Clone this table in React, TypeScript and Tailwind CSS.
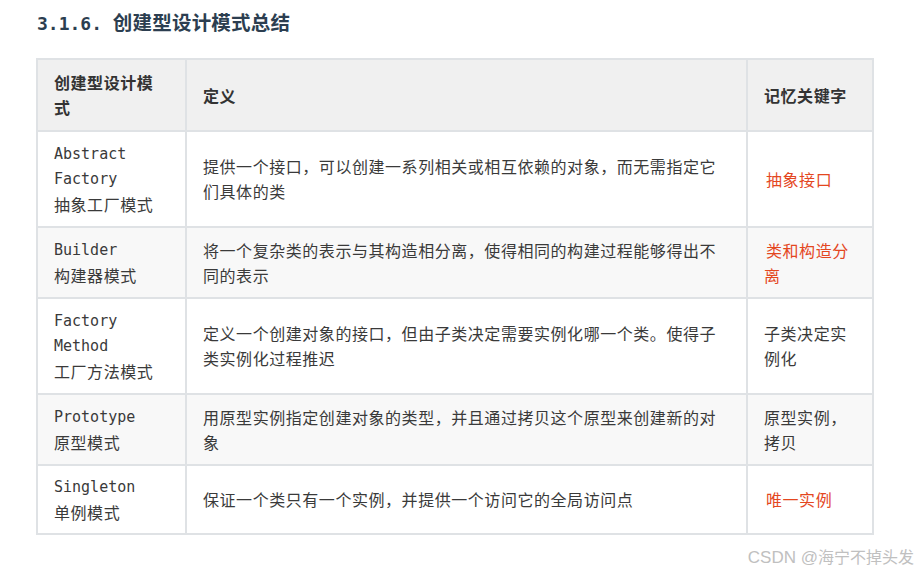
const rows = [
  {
    en: "Abstract Factory",
    zh: "抽象工厂模式",
    def: ["提供一个接口，可以创建一系列相关或相互依赖的对象，而无需指定它", "们具体的类"],
    key: "抽象接口",
    red: true,
  },
  {
    en: "Builder",
    zh: "构建器模式",
    def: ["将一个复杂类的表示与其构造相分离，使得相同的构建过程能够得出不", "同的表示"],
    key: "类和构造分离",
    red: true,
  },
  {
    en: "Factory Method",
    zh: "工厂方法模式",
    def: ["定义一个创建对象的接口，但由子类决定需要实例化哪一个类。使得子", "类实例化过程推迟"],
    key: "子类决定实例化",
    red: false,
  },
  {
    en: "Prototype",
    zh: "原型模式",
    def: ["用原型实例指定创建对象的类型，并且通过拷贝这个原型来创建新的对", "象"],
    key: "原型实例，拷贝",
    red: false,
  },
  {
    en: "Singleton",
    zh: "单例模式",
    def: ["保证一个类只有一个实例，并提供一个访问它的全局访问点"],
    key: "唯一实例",
    red: true,
  },
];

const cell = "border-2 border-[#dfe2e5] pl-4 pr-5 align-middle";

export default function App() {
  return (
    <div className="w-[920px] h-[571px] overflow-hidden bg-white font-['Noto_Sans_CJK_SC',sans-serif] text-[#3a3a3a] [text-spacing-trim:space-all]">
      <h3 className="pl-[37px] pt-[10px] leading-[24px] font-bold text-[#2c3e50]">
        <span className="font-['DejaVu_Sans_Mono',monospace] text-[18px]">3.1.6. </span>
        <span className="text-[19.5px] tracking-[0.2px]">创建型设计模式总结</span>
      </h3>

      <div className="pl-[36px] mt-[22px]">
        <table className="table-fixed border-collapse w-[836px] text-[16px] leading-[25px] tracking-[0.55px]">
          <colgroup>
            <col className="w-[149px]" />
            <col className="w-[561px]" />
            <col className="w-[126px]" />
          </colgroup>
          <thead>
            <tr className="bg-[#f0f0f0] text-[#333] font-bold text-left">
              <th className={cell + " py-[10px]"}>创建型设计模式</th>
              <th className={cell + " py-[10px]"}>定义</th>
              <th className={cell + " py-[10px]"}>记忆关键字</th>
            </tr>
          </thead>
          <tbody>
            {rows.map((r, i) => {
              const py = i === rows.length - 1 ? " py-[8.5px]" : " py-[9.5px]";
              return (
                <tr key={r.zh} className={i % 2 === 1 ? "bg-[#f8f8f8]" : "bg-white"}>
                  <td className={cell + py}>
                    <div className="font-['DejaVu_Sans_Mono',monospace] text-[15px] tracking-normal">{r.en}</div>
                    <div>{r.zh}</div>
                  </td>
                  <td className={cell + py}>
                    {r.def.map((line) => (
                      <div key={line} className="whitespace-nowrap">
                        {line}
                      </div>
                    ))}
                  </td>
                  <td className={cell + py}>
                    {r.red ? (
                      <span className="pl-[2px] text-[#e4471f]">{r.key}</span>
                    ) : (
                      r.key
                    )}
                  </td>
                </tr>
              );
            })}
          </tbody>
        </table>
      </div>

      <div className="flex justify-end pr-[6px] mt-[13px] leading-[20px] text-[#c0c0c0] font-['Liberation_Sans','Noto_Sans_CJK_SC',sans-serif]">
        <span className="text-[17px]">CSDN @</span>
        <span className="text-[16px]">海宁不掉头发</span>
      </div>
    </div>
  );
}
